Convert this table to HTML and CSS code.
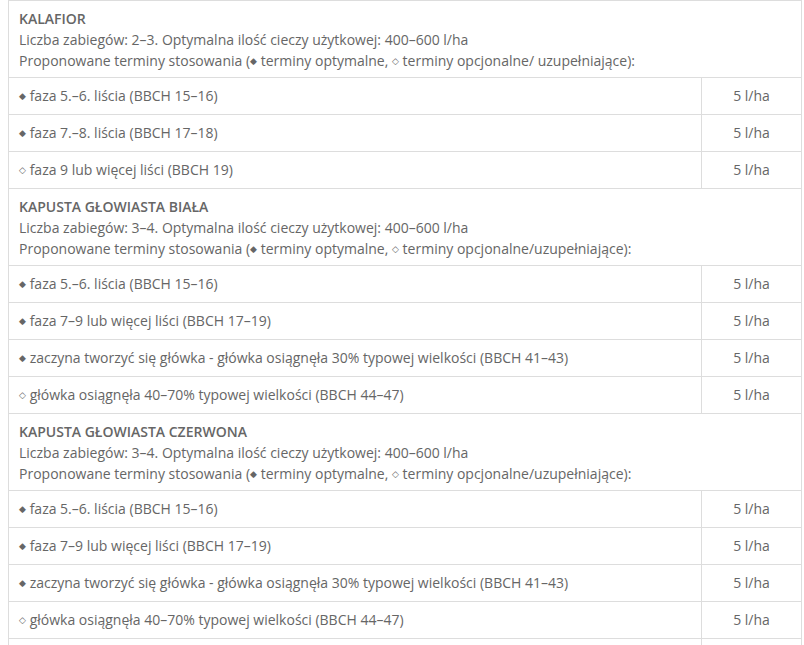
FILE: index.html
```html
<!DOCTYPE html>
<html lang="pl">
  <head>
    <meta charset="UTF-8" />
    <title>Terminy stosowania</title>
    <link rel="stylesheet" href="styles.css">
  </head>
  <body>
    <table class="dose-table">
      <!-- Kalafior -->
      <tr>
        <td class="crop" colspan="2">
          <strong>KALAFIOR</strong><br>
          Liczba zabiegów: 2–3. Optymalna ilość cieczy użytkowej: 400–600 l/ha<br>
          Proponowane terminy stosowania (<span class="mark">◆</span> terminy optymalne, <span class="mark">◇</span> terminy opcjonalne/ uzupełniające):
        </td>
      </tr>
      <tr><td><span class="mark">◆</span> faza 5.–6. liścia (BBCH 15–16)</td><td class="dose">5 l/ha</td></tr>
      <tr><td><span class="mark">◆</span> faza 7.–8. liścia (BBCH 17–18)</td><td class="dose">5 l/ha</td></tr>
      <tr><td><span class="mark">◇</span> faza 9 lub więcej liści (BBCH 19)</td><td class="dose">5 l/ha</td></tr>

      <!-- Kapusta biała -->
      <tr>
        <td class="crop" colspan="2">
          <strong>KAPUSTA GŁOWIASTA BIAŁA</strong><br>
          Liczba zabiegów: 3–4. Optymalna ilość cieczy użytkowej: 400–600 l/ha<br>
          Proponowane terminy stosowania (<span class="mark">◆</span> terminy optymalne, <span class="mark">◇</span> terminy opcjonalne/uzupełniające):
        </td>
      </tr>
      <tr><td><span class="mark">◆</span> faza 5.–6. liścia (BBCH 15–16)</td><td class="dose">5 l/ha</td></tr>
      <tr><td><span class="mark">◆</span> faza 7–9 lub więcej liści (BBCH 17–19)</td><td class="dose">5 l/ha</td></tr>
      <tr><td><span class="mark">◆</span> zaczyna tworzyć się główka - główka osiągnęła 30% typowej wielkości (BBCH 41–43)</td><td class="dose">5 l/ha</td></tr>
      <tr><td><span class="mark">◇</span> główka osiągnęła 40–70% typowej wielkości (BBCH 44–47)</td><td class="dose">5 l/ha</td></tr>

      <!-- Kapusta czerwona -->
      <tr>
        <td class="crop" colspan="2">
          <strong>KAPUSTA GŁOWIASTA CZERWONA</strong><br>
          Liczba zabiegów: 3–4. Optymalna ilość cieczy użytkowej: 400–600 l/ha<br>
          Proponowane terminy stosowania (<span class="mark">◆</span> terminy optymalne, <span class="mark">◇</span> terminy opcjonalne/uzupełniające):
        </td>
      </tr>
      <tr><td><span class="mark">◆</span> faza 5.–6. liścia (BBCH 15–16)</td><td class="dose">5 l/ha</td></tr>
      <tr><td><span class="mark">◆</span> faza 7–9 lub więcej liści (BBCH 17–19)</td><td class="dose">5 l/ha</td></tr>
      <tr><td><span class="mark">◆</span> zaczyna tworzyć się główka - główka osiągnęła 30% typowej wielkości (BBCH 41–43)</td><td class="dose">5 l/ha</td></tr>
      <tr><td><span class="mark">◇</span> główka osiągnęła 40–70% typowej wielkości (BBCH 44–47)</td><td class="dose">5 l/ha</td></tr>
      <tr><td>&nbsp;</td><td class="dose">&nbsp;</td></tr>
    </table>
  </body>
</html>
```

FILE: styles.css
```css
body {
  margin: 0;
  padding: 0 3px 0 8px;
  background: white;
  font-family: "Open Sans", Arial, sans-serif;
  font-size: 14px;
  color: #666;
  overflow: hidden;
}
.dose-table {
  width: 794px;
  border-collapse: collapse;
}
.dose-table td {
  border: 1px solid #ddd;
  padding: 8px 10px;
  line-height: 20px;
  vertical-align: middle;
}
.dose-table .crop {
  padding: 7px 10px 6px;
  line-height: 21px;
}
.crop strong {
  font-weight: 600;
}
.dose-table .dose {
  width: 79px;
  text-align: center;
}
.mark {
  font-size: 9px;
  vertical-align: 2px;
}
```
